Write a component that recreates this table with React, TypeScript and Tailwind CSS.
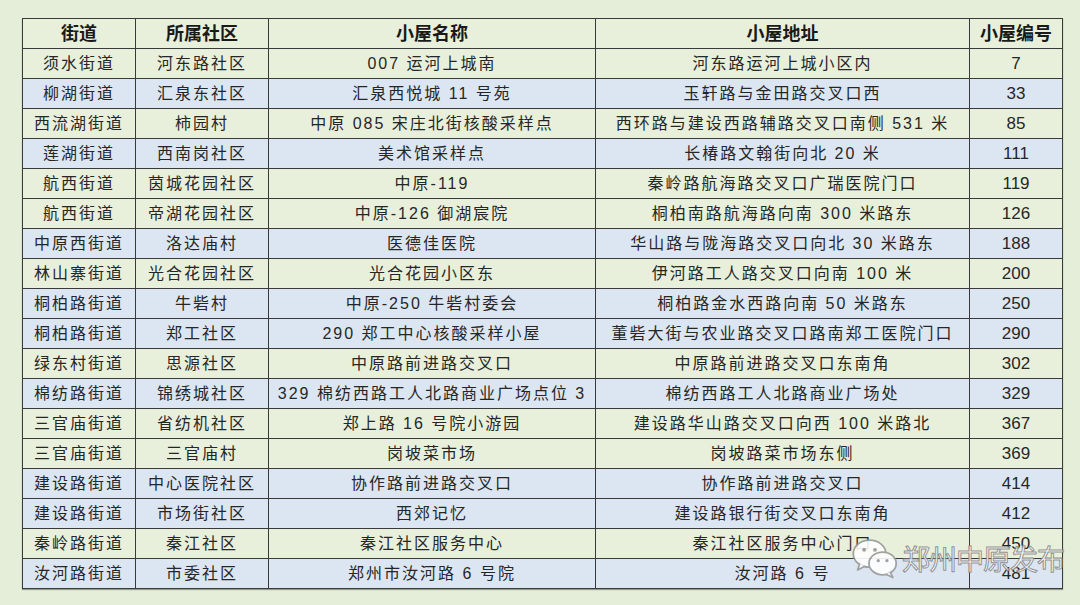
const rows: [string, string, string, string, string, "g" | "b"][] = [
  ["须水街道", "河东路社区", "007 运河上城南", "河东路运河上城小区内", "7", "g"],
  ["柳湖街道", "汇泉东社区", "汇泉西悦城 11 号苑", "玉轩路与金田路交叉口西", "33", "b"],
  ["西流湖街道", "柿园村", "中原 085 宋庄北街核酸采样点", "西环路与建设西路辅路交叉口南侧 531 米", "85", "g"],
  ["莲湖街道", "西南岗社区", "美术馆采样点", "长椿路文翰街向北 20 米", "111", "b"],
  ["航西街道", "茵城花园社区", "中原-119", "秦岭路航海路交叉口广瑞医院门口", "119", "g"],
  ["航西街道", "帝湖花园社区", "中原-126 御湖宸院", "桐柏南路航海路向南 300 米路东", "126", "g"],
  ["中原西街道", "洛达庙村", "医德佳医院", "华山路与陇海路交叉口向北 30 米路东", "188", "b"],
  ["林山寨街道", "光合花园社区", "光合花园小区东", "伊河路工人路交叉口向南 100  米", "200", "g"],
  ["桐柏路街道", "牛砦村", "中原-250 牛砦村委会", "桐柏路金水西路向南 50 米路东", "250", "b"],
  ["桐柏路街道", "郑工社区", "290 郑工中心核酸采样小屋", "董砦大街与农业路交叉口路南郑工医院门口", "290", "b"],
  ["绿东村街道", "思源社区", "中原路前进路交叉口", "中原路前进路交叉口东南角", "302", "g"],
  ["棉纺路街道", "锦绣城社区", "329 棉纺西路工人北路商业广场点位 3", "棉纺西路工人北路商业广场处", "329", "b"],
  ["三官庙街道", "省纺机社区", "郑上路 16 号院小游园", "建设路华山路交叉口向西 100 米路北", "367", "g"],
  ["三官庙街道", "三官庙村", "岗坡菜市场", "岗坡路菜市场东侧", "369", "g"],
  ["建设路街道", "中心医院社区", "协作路前进路交叉口", "协作路前进路交叉口", "414", "b"],
  ["建设路街道", "市场街社区", "西郊记忆", "建设路银行街交叉口东南角", "412", "b"],
  ["秦岭路街道", "秦江社区", "秦江社区服务中心", "秦江社区服务中心门口", "450", "g"],
  ["汝河路街道", "市委社区", "郑州市汝河路 6 号院", "汝河路 6 号", "481", "b"],
];

const headers = ["街道", "所属社区", "小屋名称", "小屋地址", "小屋编号"];
const widths = ["w-[113px]", "w-[133px]", "w-[327px]", "w-[374px]", "w-[93px]"];

function WeChatMark() {
  return (
    <svg width="50" height="44" viewBox="0 0 46 40" fill="none">
      <ellipse cx="18" cy="16" rx="15" ry="12.5" fill="white" stroke="#9a9a9a" strokeWidth="1.6" />
      <path d="M9 25 L7 31 L13.5 27.5" fill="white" stroke="#9a9a9a" strokeWidth="1.6" strokeLinejoin="round" />
      <circle cx="13" cy="12.5" r="1.8" fill="#9a9a9a" />
      <circle cx="23" cy="12.5" r="1.8" fill="#9a9a9a" />
      <ellipse cx="30" cy="25" rx="12.5" ry="10.5" fill="white" stroke="#9a9a9a" strokeWidth="1.6" />
      <path d="M37 33 L39.5 38 L33 35" fill="white" stroke="#9a9a9a" strokeWidth="1.6" strokeLinejoin="round" />
      <circle cx="26" cy="22.5" r="1.5" fill="#9a9a9a" />
      <circle cx="34" cy="22.5" r="1.5" fill="#9a9a9a" />
    </svg>
  );
}

export default function App() {
  return (
    <div
      className="relative w-[1080px] h-[605px] overflow-hidden bg-[#e4eed9] pt-[18px] pl-[22px]"
      style={{ fontFamily: '"Liberation Sans", "Noto Sans CJK SC", sans-serif' }}
    >
      <table className="table-fixed border-collapse text-[#262626] shadow-[0_1px_1px_rgba(0,0,0,0.35)]">
        <colgroup>
          {widths.map((w, i) => (
            <col key={i} className={w} />
          ))}
        </colgroup>
        <thead>
          <tr className="bg-[#e8f0dc]">
            {headers.map((h) => (
              <th
                key={h}
                className="h-[30px] border border-[#3a3a3a] p-0 text-center text-[18px] font-bold leading-none text-[#1a1a1a]"
              >
                {h}
              </th>
            ))}
          </tr>
        </thead>
        <tbody>
          {rows.map((r, i) => (
            <tr key={i} className={r[5] === "g" ? "bg-[#e8f0dc]" : "bg-[#dce6f2]"}>
              {r.slice(0, 5).map((c, j) => (
                <td
                  key={j}
                  className={
                    "h-[30px] border border-[#3a3a3a] p-0 text-center whitespace-nowrap leading-none " +
                    (j === 4 ? "text-[17px]" : "text-[16px] tracking-[2px]")
                  }
                >
                  {c}
                </td>
              ))}
            </tr>
          ))}
        </tbody>
      </table>

      <div className="absolute left-[850px] top-[536px] flex items-center gap-[2px] opacity-90">
        <WeChatMark />
        <span
          className="text-[28px] leading-none text-white tracking-[-1px]"
          style={{
            fontFamily: '"Noto Sans CJK SC", sans-serif',
            WebkitTextStroke: "1px #8a8a8a",
          }}
        >
          郑州中原发布
        </span>
      </div>
    </div>
  );
}
